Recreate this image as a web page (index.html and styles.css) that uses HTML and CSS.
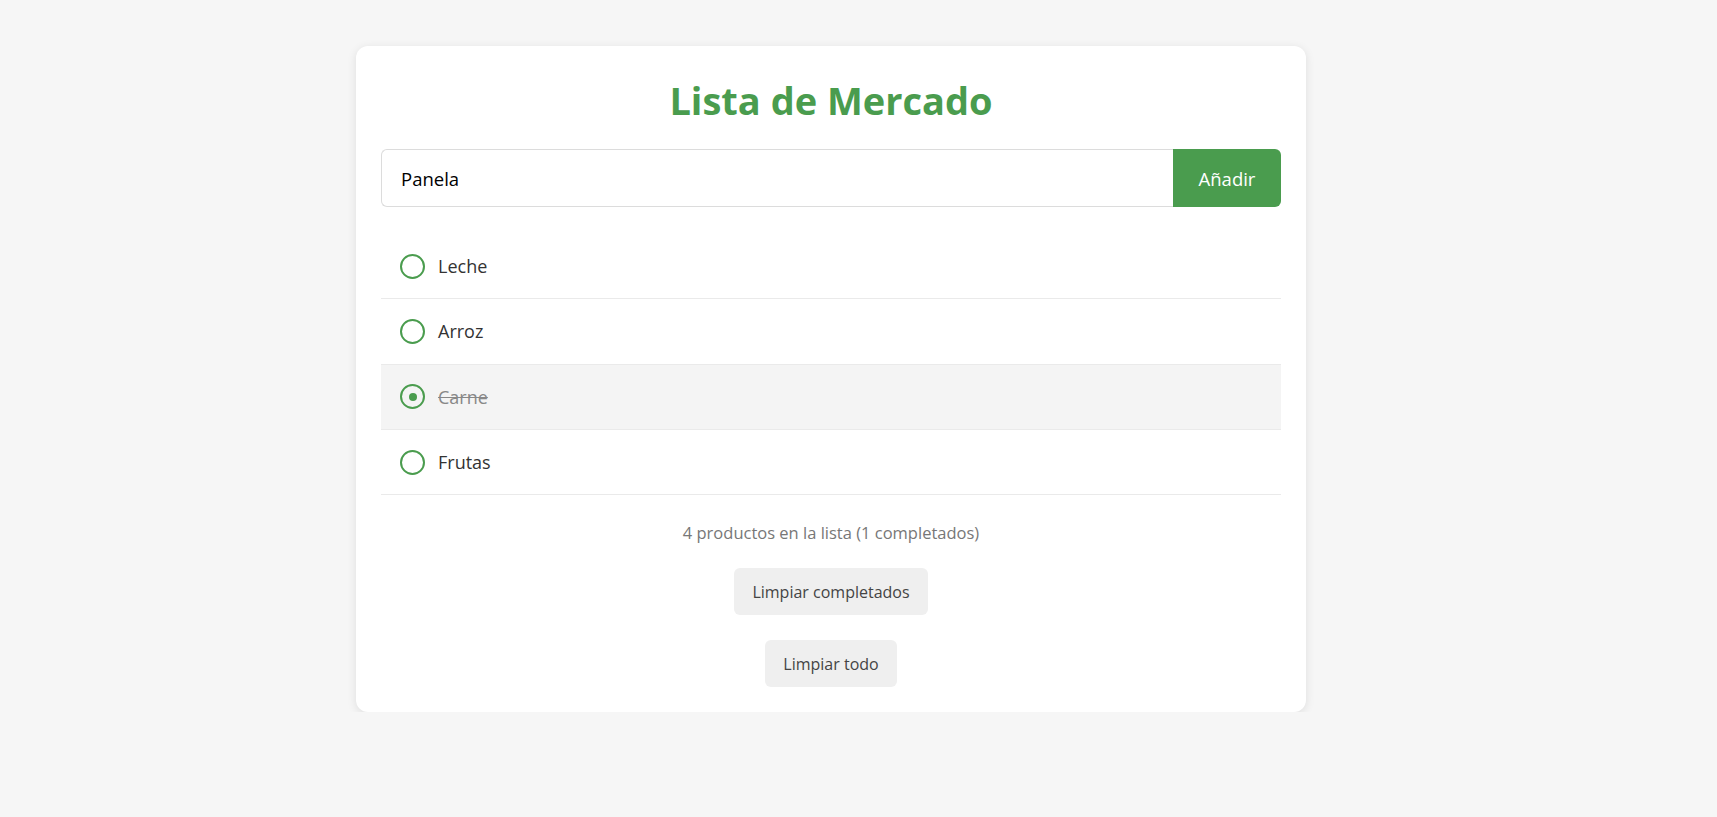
FILE: index.html
```html
<!DOCTYPE html>
<html lang="es">
<head>
<meta charset="utf-8">
<title>Lista de Mercado</title>
<link rel="stylesheet" href="styles.css">
</head>
<body>
<main class="card">
  <h1 class="title">Lista de Mercado</h1>
  <form class="add-form">
    <input class="add-input" type="text" value="Panela">
    <button class="add-btn" type="button">Añadir</button>
  </form>
  <ul class="list">
    <li class="item"><span class="check"></span><span class="label">Leche</span></li>
    <li class="item"><span class="check"></span><span class="label">Arroz</span></li>
    <li class="item done"><span class="check"></span><span class="label">Carne</span></li>
    <li class="item"><span class="check"></span><span class="label">Frutas</span></li>
  </ul>
  <p class="summary">4 productos en la lista (1 completados)</p>
  <div class="actions">
    <button class="ghost-btn" type="button">Limpiar completados</button>
    <button class="ghost-btn" type="button">Limpiar todo</button>
  </div>
</main>
</body>
</html>
```
FILE: styles.css
```css
* { box-sizing: border-box; }

html, body {
  margin: 0;
  padding: 0;
  background: #f6f6f6;
  font-family: "Open Sans", "Noto Sans", sans-serif;
}

body {
  padding: 46px 0 0 356px;
}

.card {
  width: 950px;
  background: #fff;
  border-radius: 12px;
  box-shadow: 0 2px 10px rgba(0, 0, 0, 0.1);
  padding: 25px;
}

.title {
  margin: 3px 0 22px;
  text-align: center;
  color: #4a9c4e;
  font-size: 38px;
  line-height: 53px;
  font-weight: 700;
}

.add-form {
  display: flex;
  margin: 0 0 27px;
}

.add-input {
  flex: 1;
  height: 58px;
  border: 1px solid #dcdcdc;
  border-right: none;
  border-radius: 6px 0 0 6px;
  padding: 0 19px;
  font-family: inherit;
  font-size: 18.5px;
  color: #000;
  outline: none;
}

.add-btn {
  width: 108px;
  height: 58px;
  border: none;
  border-radius: 0 6px 6px 0;
  background: #4a9c4e;
  color: #fff;
  font-family: inherit;
  font-size: 18.5px;
}

.list {
  list-style: none;
  margin: 0;
  padding: 0;
}

.item {
  display: flex;
  align-items: center;
  gap: 13px;
  height: 65.3px;
  padding: 0 19px;
  border-bottom: 1px solid #eaeaea;
  font-size: 18px;
  color: #333;
}

.item.done {
  background: #f4f4f4;
}

.item.done .label {
  color: #888;
  text-decoration: line-through;
}

.check {
  width: 25px;
  height: 25px;
  border: 2px solid #4a9c4e;
  border-radius: 50%;
  display: flex;
  align-items: center;
  justify-content: center;
  flex: none;
}

.item.done .check::after {
  content: "";
  width: 8px;
  height: 8px;
  border-radius: 50%;
  background: #4a9c4e;
}

.summary {
  margin: 25px 0 0;
  text-align: center;
  color: #777;
  font-size: 16.5px;
  line-height: 26px;
}

.actions {
  display: flex;
  flex-direction: column;
  align-items: center;
  gap: 25px;
  margin-top: 22px;
}

.ghost-btn {
  height: 47px;
  padding: 0 18px;
  border: none;
  border-radius: 6px;
  background: #efefef;
  color: #444;
  font-family: inherit;
  font-size: 16px;
}
```
